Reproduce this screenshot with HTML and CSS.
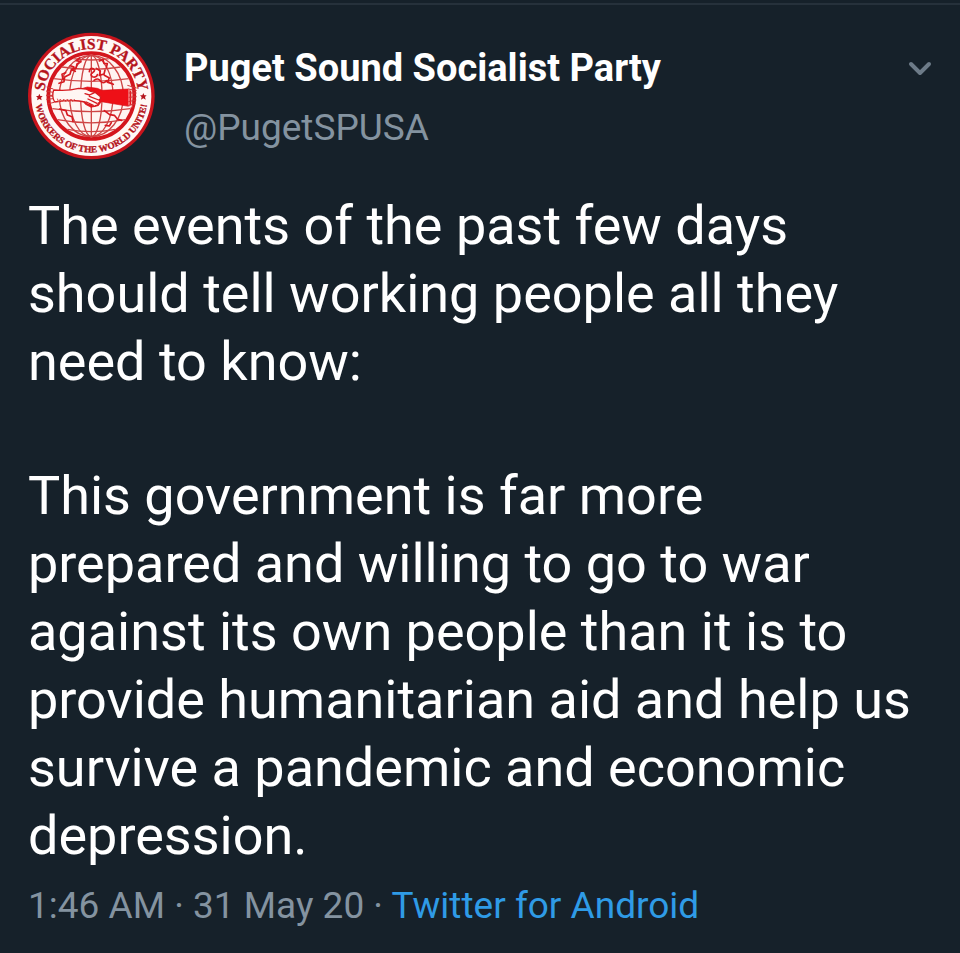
FILE: index.html
```html
<!DOCTYPE html>
<html lang="en">
<head>
<meta charset="utf-8">
<meta name="viewport" content="width=device-width, initial-scale=1">
<title>Puget Sound Socialist Party</title>
<link rel="stylesheet" href="styles.css">
</head>
<body>
<article class="tweet">
  <header class="tweet-header">
    <svg class="avatar" viewBox="24 20 384 384" role="img" aria-label="Socialist Party emblem">
      <defs>
        <path id="arc-top" d="M73 212a141 141 0 0 1 282 0"/>
        <path id="arc-bottom" d="M45 212a169 169 0 0 0 338 0"/>
        <clipPath id="globe"><circle cx="214" cy="212" r="124"/></clipPath>
      </defs>
      <circle cx="214" cy="212" r="190" fill="#c9141c"/>
      <circle cx="214" cy="212" r="180" fill="#fff8f5"/>
      <g class="seal-text">
        <text class="seal-name"><textPath href="#arc-top" startOffset="50%">SOCIALIST PARTY</textPath></text>
        <text class="seal-motto"><textPath href="#arc-bottom" startOffset="50%">WORKERS OF THE WORLD UNITE!</textPath></text>
      </g>
      <path fill="#b5141c" d="M58 205l3 7 7 0-5 5 2 8-7-4-7 4 2-8-5-5 7 0zM370 203l3 7 7 0-5 5 2 8-7-4-7 4 2-8-5-5 7 0z"/>
      <circle cx="214" cy="212" r="129" fill="#fff4f1" stroke="#d4161d" stroke-width="11"/>
      <g clip-path="url(#globe)" fill="none" stroke="#ce4545" stroke-width="4">
        <path d="M214 88v248M88 212h252M101 160q113 16 226 0M126 125q88 14 176 0M160 100q54 8 108 0M97 250q117 18 234 0M112 283q102 19 204 0M142 312q72 14 144 0"/>
        <ellipse cx="214" cy="212" rx="32" ry="122"/>
        <ellipse cx="214" cy="212" rx="65" ry="122"/>
        <ellipse cx="214" cy="212" rx="96" ry="122"/>
      </g>
      <g fill="none" stroke="#d71920" stroke-width="5" stroke-linecap="round" stroke-linejoin="round">
        <path d="M117 174l15-5 2-14 16-8 4-14 14-4 3-13 12-7-14-3 10-8M137 142l-11 5 3 15M151 121l11 4-5 10 9 3"/>
        <path d="M238 107l11-5 3 12 10 1-3 12M208 139q2-13 12-9 8 5-2 12-9 5-1 12 12 4 15-6M229 129l12 8-3 13 14-4 3-12M222 165q13-9 19 2 9 11 18-1l13 8M253 150l15 8-6 13 18 6"/>
        <path d="M119 251l19 5 4 13 14 5 3 15M253 256l16 12 14 2 10 12 12 3M256 300l12 2 6-10"/>
      </g>
      <path fill="#ee1017" stroke="#d80f16" stroke-width="2" d="M181 191l21-6 30 4 14 6 79-4 9 8v38l-8 6-82-14-9 12-22 5-17-9-10-14z"/>
      <path fill="#fff6f3" stroke="#d51b20" stroke-width="4" stroke-linejoin="round" d="M101 194q42 4 75-5l22 2q14 9 27 10l15 12q4 7-2 10 4 8-3 10 0 8-9 8-5 5-13-2-10 1-18-9l-18-3q-29-4-73 3-10-16-3-36z"/>
      <path fill="none" stroke="#d51b20" stroke-width="4" stroke-linecap="round" d="M225 201l-17 8-13-4M208 213l28 11M204 221l27 13M199 230l21 10"/>
      <path fill="none" stroke="#dc5553" stroke-width="3" d="M112 220l4 10 5-9 5 9 5-9 6 9 5-9 5 9 6-9 5 8 6-8"/>
      <path fill="none" stroke="#f7c0bb" stroke-width="3" d="M327 190v55M335 186v60"/>
      <path fill="none" stroke="#cf3538" stroke-width="3" d="M322 180l28 8M325 191l25 5M326 203h24M326 216l24-2M325 229l24-5M322 241l25-6M80 185l20 6M78 197l21 4M78 210h20M79 222l20-2M82 236l20-5"/>
    </svg>
    <div class="author">
      <h1 class="name">Puget Sound Socialist Party</h1>
      <span class="handle">@PugetSPUSA</span>
    </div>
    <button class="menu" type="button" aria-label="More options">
      <svg class="chevron" viewBox="0 0 24 16" aria-hidden="true"><path d="M3 3l9 9 9-9"/></svg>
    </button>
  </header>
  <div class="message">
    <p>The events of the past few days should tell working people all they need to know:</p>
    <p>This government is far more prepared and willing to go to war against its own people than it is to provide humanitarian aid and help us survive a pandemic and economic depression.</p>
  </div>
  <footer class="meta"><time datetime="2020-05-31T01:46">1:46 AM · 31 May 20</time> · <a href="#">Twitter for Android</a></footer>
</article>
</body>
</html>
```
FILE: styles.css
```css
* {
  box-sizing: border-box;
}

body {
  margin: 0;
  padding-top: 3px;
  background: #16212a;
  color: #fff;
  font-family: Roboto, "Liberation Sans", sans-serif;
}

.tweet {
  border-top: 2px solid #26313b;
  padding: 27px 28px 24px;
}

.tweet-header {
  display: flex;
  align-items: flex-start;
  gap: 28px;
}

.avatar {
  flex: none;
  width: 128px;
  height: 128px;
}

.seal-text {
  fill: #b5141c;
  stroke: #b5141c;
  stroke-width: 1px;
  font-family: "Liberation Serif", serif;
  font-weight: 700;
  text-anchor: middle;
}

.seal-name {
  font-size: 46px;
}

.seal-motto {
  font-size: 28px;
}

.author {
  flex: 1;
  padding-top: 6px;
}

.name {
  margin: 0;
  font-size: 38px;
  line-height: 60px;
  font-weight: 700;
}

.handle {
  display: block;
  color: #8493a0;
  font-size: 37px;
  line-height: 60px;
}

.menu {
  margin-top: 25px;
  padding: 4px 0;
  border: 0;
  background: none;
  color: #6d7b88;
}

.chevron {
  display: block;
  width: 24px;
  height: 16px;
  fill: none;
  stroke: currentColor;
  stroke-width: 4;
  stroke-linecap: round;
  stroke-linejoin: round;
}

.message {
  margin-top: 32px;
  padding-right: 12px;
  font-size: 54px;
  line-height: 68px;
}

.message p {
  margin: 0 0 66px;
}

.message p:last-child {
  margin-bottom: 0;
}

.meta {
  margin-top: 12px;
  color: #8493a0;
  font-size: 37px;
  line-height: 48px;
}

.meta a {
  color: #2f9be6;
  text-decoration: none;
}
```
